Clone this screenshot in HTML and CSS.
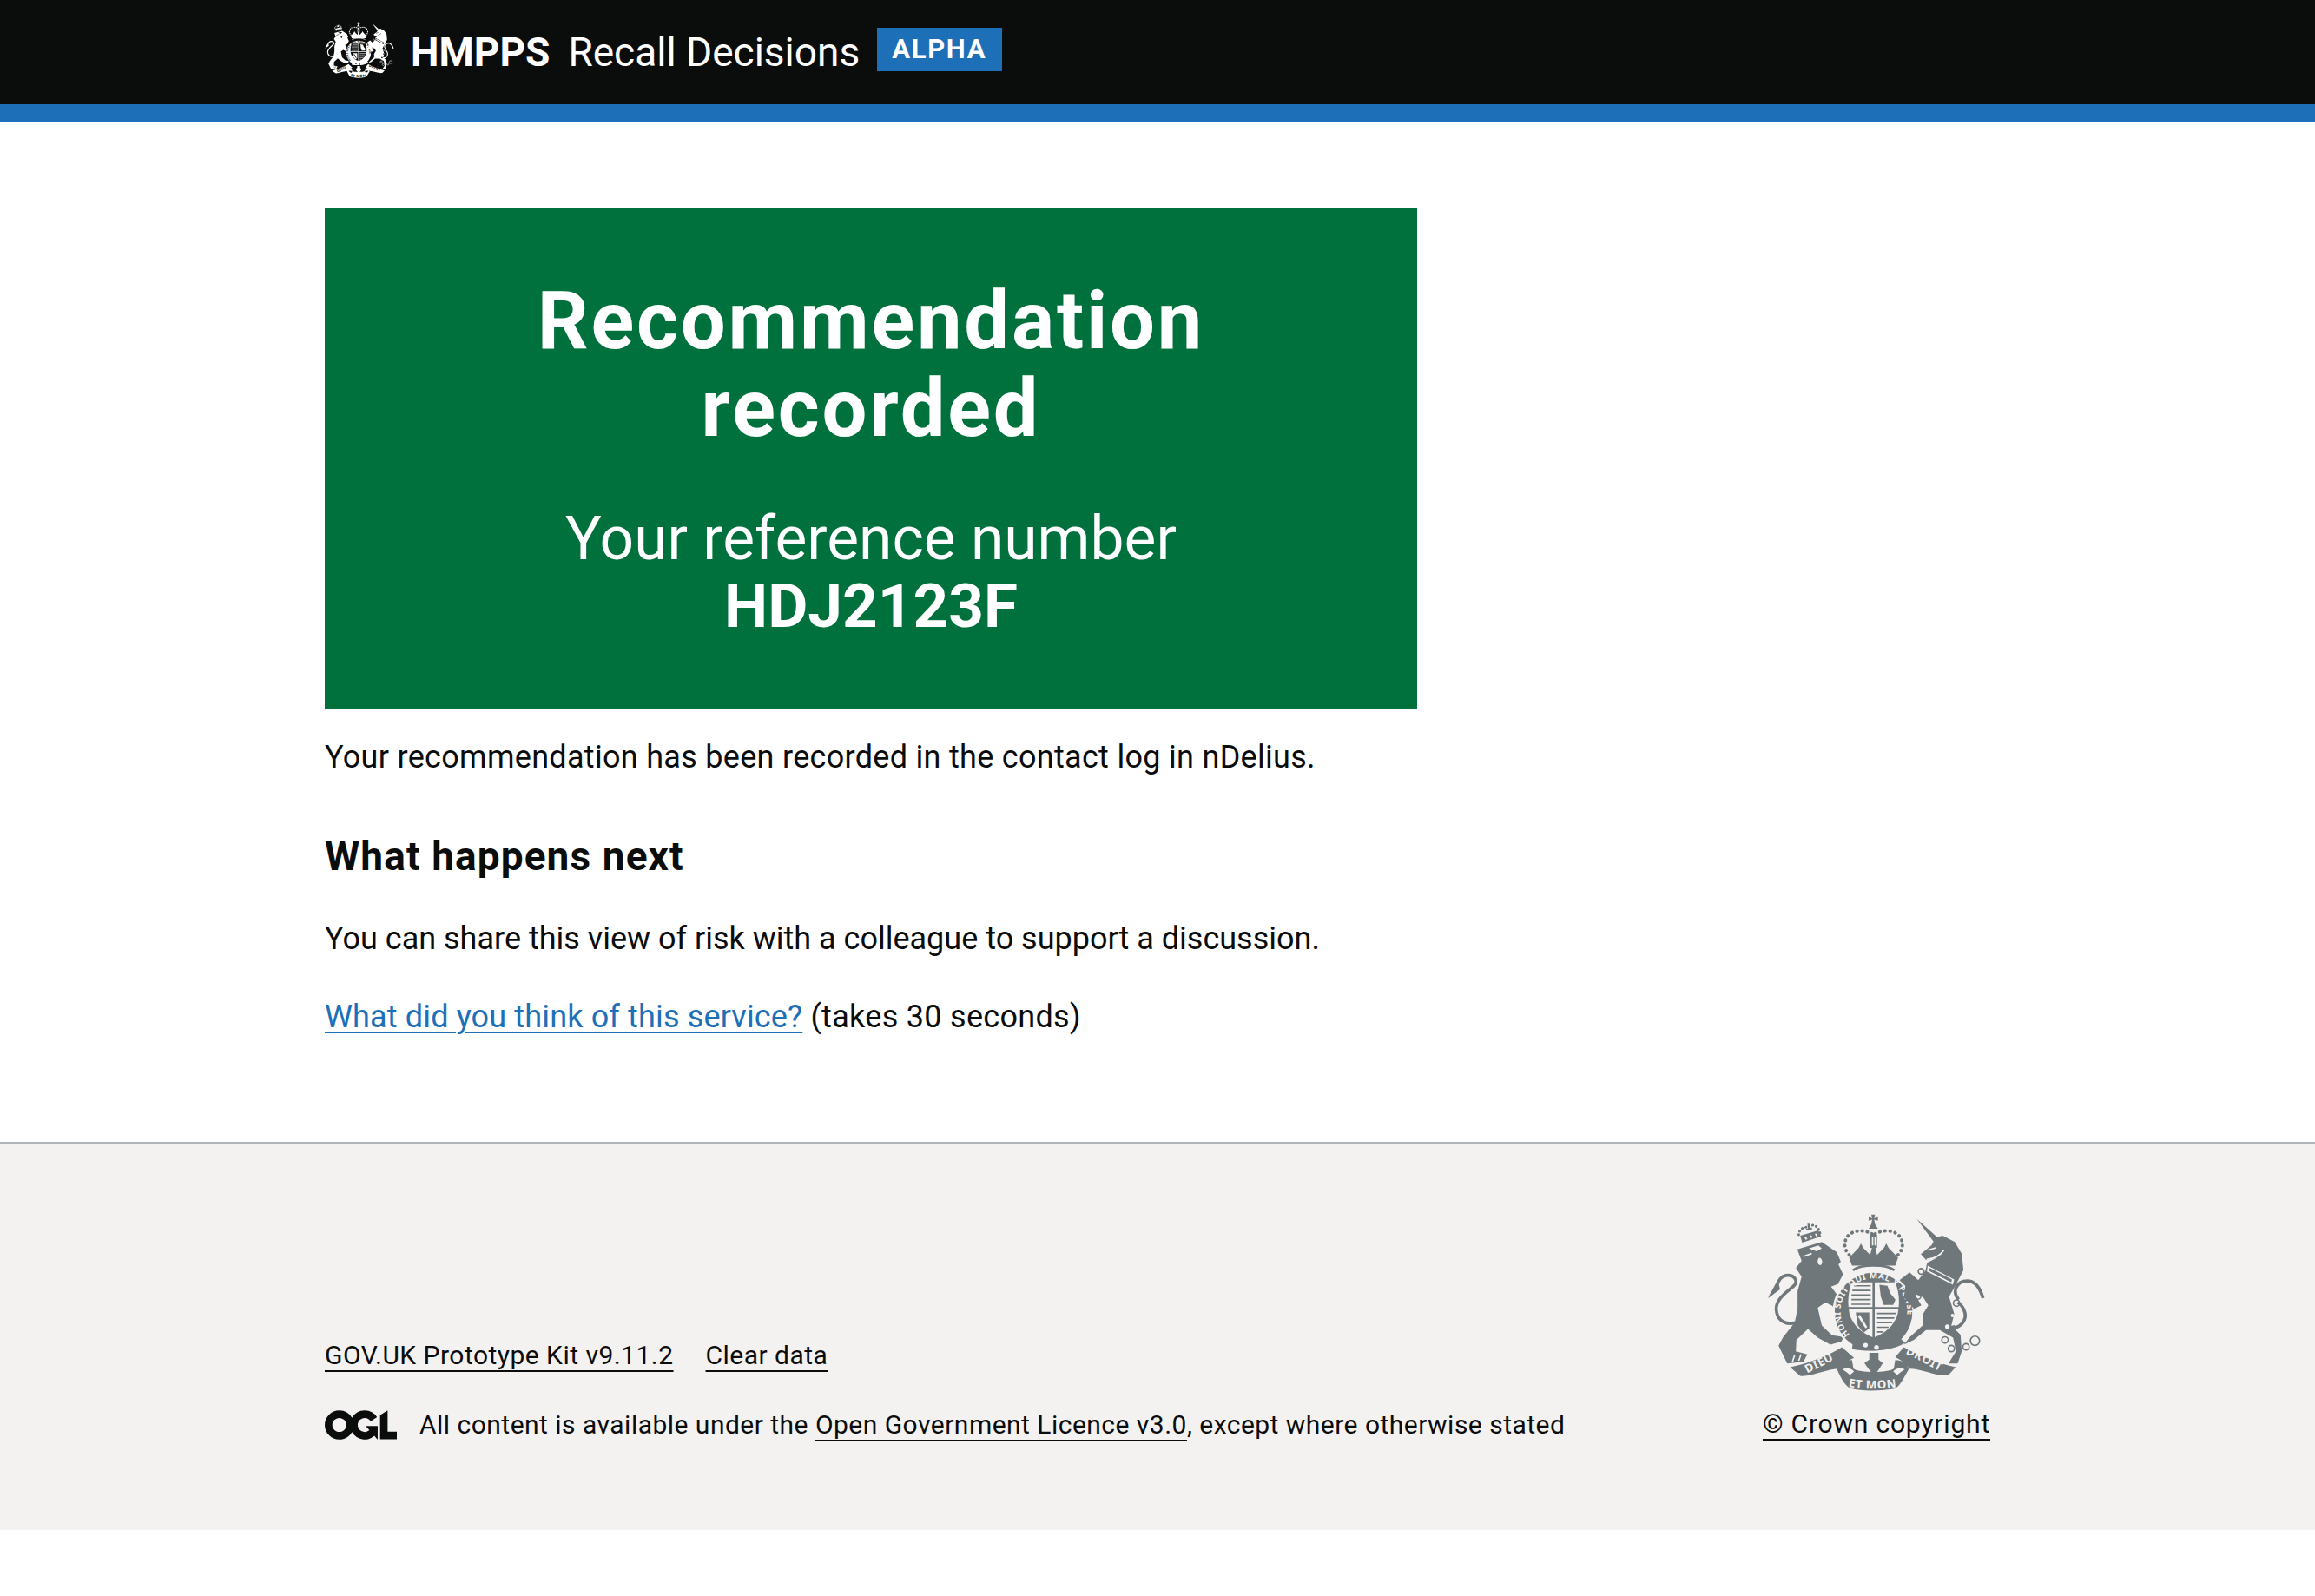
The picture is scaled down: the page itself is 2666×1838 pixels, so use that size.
FILE: index.html
```html
<!DOCTYPE html>
<html lang="en">
<head>
    <meta charset="UTF-8">
    <title>Recommendation recorded - Recall Decisions</title>
    <link rel="stylesheet" href="styles.css">
</head>
<body>
    <svg class="defs" aria-hidden="true">
        <symbol id="crest" viewBox="50 50 760 620">
            <!-- lion -->
            <path class="crest-fg" d="M155 175 L240 150 L262 165 L292 185 L306 218 L298 228 L314 262 L296 296 L272 305 L330 382 L318 402 L285 406 L278 372 L252 360 L226 378 L240 440 L276 474 L316 480 L308 496 L270 506 L226 482 L192 452 L152 490 L150 530 L190 540 L176 566 L120 572 L90 510 L106 480 L146 430 L156 380 L156 320 L170 270 L150 240 L170 215 Z"/>
            <path class="crest-line" d="M148 430 C110 440 85 420 82 385 C80 345 125 320 145 300 C158 285 145 262 115 266 C92 270 88 295 72 320"/>
            <path class="crest-fg" d="M54 345 C60 325 75 305 90 292 L95 315 C80 325 68 335 54 345Z"/>
            <path class="crest-bg" d="M195 172 L228 162 L240 172 L222 182 Z M230 205 C242 205 246 225 236 230 C226 232 222 215 230 205Z"/>
            <path class="crest-gap" d="M176 200 L205 190 M258 362 C262 378 272 392 282 398 M300 378 L292 400 M312 384 L304 402 M168 540 L160 562 M146 542 L138 566"/>
            <path class="crest-dots crest-dots-small" d="M160 125 C160 105 180 95 192 100 C205 85 228 90 234 120"/>
            <path class="crest-fg" d="M165 128 L228 110 L238 130 L172 152 Z M186 103 L192 103 L190 86 L198 86 L198 101 L206 100 L206 106 L186 110 Z"/>
            <path class="crest-bg" d="M180 134 L186 132 L190 140 L184 142 Z M198 128 L204 126 L208 134 L202 136 Z M216 122 L222 120 L226 128 L220 130 Z"/>
            <!-- crown -->
            <path class="crest-fg" d="M403 60 L415 68 L412 55 L425 55 L422 68 L435 60 L435 76 L422 72 L425 88 L435 104 L403 104 L412 88 L415 72 L403 76 Z"/>
            <path class="crest-dots" d="M415 122 C380 100 320 110 320 160 C320 180 335 195 345 205 M425 122 C460 100 520 110 520 160 C520 180 505 195 495 205"/>
            <path class="crest-fg" d="M335 205 L368 170 L376 155 L384 170 L408 195 L414 170 L408 170 L408 125 L432 125 L432 170 L426 170 L432 195 L456 170 L464 155 L472 170 L505 205 L495 232 L345 232 Z"/>
            <path class="crest-bg" d="M414 132 L419 132 L419 162 L414 162 Z M423 132 L428 132 L428 162 L423 162 Z"/>
            <path class="crest-ring" d="M348 248 C375 226 465 226 492 248"/>
            <!-- garter and shield -->
            <circle class="crest-halo" cx="420" cy="392" r="137"/>
            <circle class="crest-fg" cx="420" cy="392" r="135"/>
            <path class="crest-bg" d="M345 290 L495 290 C508 320 512 360 504 398 C494 440 455 470 420 482 C385 470 346 440 336 398 C328 360 332 320 345 290 Z"/>
            <path class="crest-fg" d="M416 285 L424 285 L424 490 L416 490 Z M330 376 L510 376 L510 384 L330 384 Z"/>
            <path class="crest-hatch" d="M352 302 L410 302 M346 318 L410 318 M343 334 L410 334 M343 350 L410 350 M343 366 L410 366 M432 398 L498 398 M432 414 L492 414 M432 430 L484 430 M432 446 L472 446 M432 462 L452 462"/>
            <path class="crest-fg" d="M440 298 L468 302 L478 328 L496 350 L488 368 L455 368 L445 340 Z M358 395 L405 395 L405 450 L385 465 L365 440 Z"/>
            <path class="crest-bg" d="M372 402 L398 445 L392 450 L366 410 Z"/>
            <path id="garter" class="crest-none" d="M337 472 A116 116 0 1 1 505 472"/>
            <text class="crest-text crest-garter"><textPath href="#garter">HONI SOIT QUI MAL Y PENSE</textPath></text>
            <path class="crest-fg" d="M345 522 L350 478 C385 505 450 510 510 482 L530 500 C480 530 400 532 345 522Z"/>
            <circle class="crest-bg" cx="392" cy="508" r="8"/>
            <circle class="crest-bg" cx="430" cy="516" r="8"/>
            <!-- unicorn -->
            <path class="crest-fg" d="M570 70 L640 132 L660 128 L702 150 L726 190 L732 248 L705 300 L682 340 L700 400 L690 440 L722 472 L726 530 L712 572 L680 572 L706 530 L696 482 L650 456 L602 456 L560 490 L525 506 L546 480 L590 440 L590 402 L610 370 L592 342 L562 330 L586 370 L560 382 L526 342 L530 302 L510 282 L545 255 L575 282 L600 250 L606 222 L640 205 L602 212 L584 192 L622 160 L628 148 Z"/>
            <path class="crest-line" d="M712 360 C730 370 745 400 735 420 C728 440 700 455 695 440 M715 350 C690 320 710 285 745 285 C775 285 790 310 800 345"/>
            <path class="crest-bg" d="M608 232 L700 280 L695 298 L605 252 Z"/>
            <path class="crest-fg" d="M615 240 L692 280 L690 290 L612 250 Z M622 228 L628 231 L626 240 L620 238 Z M644 240 L650 243 L648 252 L642 250 Z M668 252 L674 255 L672 264 L666 262 Z"/>
            <path class="crest-gap" d="M610 178 L636 170 M604 210 C630 208 650 198 664 178"/>
            <circle class="crest-ring2" cx="585" cy="252" r="10"/>
            <circle class="crest-ring2" cx="573" cy="338" r="11"/>
            <circle class="crest-ring2" cx="708" cy="362" r="11"/>
            <circle class="crest-ring2" cx="668" cy="490" r="11"/>
            <circle class="crest-ring2" cx="690" cy="520" r="11"/>
            <circle class="crest-ring2" cx="741" cy="514" r="11"/>
            <circle class="crest-ring2" cx="772" cy="493" r="16"/>
            <circle class="crest-bg" cx="676" cy="444" r="8"/>
            <circle class="crest-bg" cx="694" cy="405" r="6"/>
            <!-- motto -->
            <path class="crest-fg" d="M130 585 C200 570 270 540 310 515 L352 552 C330 560 315 580 305 590 C255 590 200 620 165 615 Z"/>
            <path class="crest-fg" d="M705 585 C640 570 570 540 525 515 L495 550 C520 560 535 580 545 590 C590 590 640 620 680 612 Z"/>
            <path class="crest-fg" d="M292 590 C300 570 320 560 345 560 L350 590 C370 605 470 605 490 590 L495 560 C520 560 535 570 542 592 C525 620 510 655 490 660 C430 668 380 668 340 658 C320 650 305 620 292 590 Z"/>
            <path class="crest-bg" d="M312 592 C330 585 345 590 352 600 L338 612 C330 604 320 598 312 592Z M528 592 C510 585 495 590 488 600 L502 612 C510 604 520 598 528 592Z"/>
            <path class="crest-fg" d="M405 535 L437 535 L437 558 L452 570 L440 590 L422 615 L402 590 L388 570 L405 558 Z"/>
            <path id="dieu" class="crest-none" d="M190 606 C220 590 265 570 300 548"/>
            <text class="crest-text crest-motto"><textPath href="#dieu">DIEU</textPath></text>
            <path id="droit" class="crest-none" d="M530 538 C570 553 615 583 665 606"/>
            <text class="crest-text crest-motto"><textPath href="#droit">DROIT</textPath></text>
            <path id="etmon" class="crest-none" d="M332 652 C380 662 460 662 508 652"/>
            <text class="crest-text crest-motto"><textPath href="#etmon">ET MON</textPath></text>
        </symbol>
    </svg>

    <header class="site-header">
        <div class="width-container header-inner">
            <svg class="header-crest" role="img" aria-label="Royal coat of arms"><use href="#crest"/></svg>
            <span class="header-org">HMPPS</span>
            <span class="header-service">Recall Decisions</span>
            <strong class="phase-tag">ALPHA</strong>
        </div>
    </header>

    <main class="width-container main">
        <div class="panel">
            <h1 class="panel-title">Recommendation recorded</h1>
            <div class="panel-body">Your reference number<br><strong class="panel-ref">HDJ2123F</strong></div>
        </div>
        <p class="body-text">Your recommendation has been recorded in the contact log in nDelius.</p>
        <h2 class="heading">What happens next</h2>
        <p class="body-text body-tight">You can share this view of risk with a colleague to support a discussion.</p>
        <p class="body-text"><a class="link" href="#">What did you think of this service?</a> (takes 30 seconds)</p>
    </main>

    <footer class="site-footer">
        <div class="width-container footer-inner">
            <div class="footer-meta">
                <ul class="footer-links">
                    <li><a class="footer-link" href="#">GOV.UK Prototype Kit v9.11.2</a></li>
                    <li><a class="footer-link" href="#">Clear data</a></li>
                </ul>
                <div class="licence">
                    <svg class="ogl" viewBox="0 0 483.2 195.7" role="img" aria-label="Open Government Licence"><path fill="currentColor" d="M421.5 142.8V.1l-50.7 32.3v161.1h112.4v-50.7zm-122.3-9.6A47.12 47.12 0 0 1 221 97.8c0-26 21.1-47.1 47.1-47.1 16.7 0 31.4 8.7 39.7 21.8l42.7-27.2A97.63 97.63 0 0 0 268.1 0c-36.5 0-68.3 20.1-85.1 49.7A98 98 0 0 0 97.8 0C43.9 0 0 43.9 0 97.8s43.9 97.8 97.8 97.8c36.5 0 68.3-20.1 85.1-49.7a97.76 97.76 0 0 0 149.6 25.4l19.4 22.2h3v-87.8h-80l24.3 27.5zM97.8 145c-26 0-47.1-21.1-47.1-47.1s21.1-47.1 47.1-47.1 47.2 21 47.2 47S123.8 145 97.8 145"/></svg>
                    <span>All content is available under the <a class="footer-link" href="#">Open Government Licence v3.0</a>, except where otherwise stated</span>
                </div>
            </div>
            <div class="copyright">
                <svg class="footer-crest" role="img" aria-label="Royal coat of arms"><use href="#crest"/></svg>
                <a class="footer-link" href="#">© Crown copyright</a>
            </div>
        </div>
    </footer>
</body>
</html>
```

FILE: styles.css
```css
body {
    font-family: Roboto, Arial, sans-serif;
    margin: 0;
    padding: 0;
    background-color: #ffffff;
    color: #0b0c0c;
}
.defs {
    display: none;
}
.width-container {
    width: 1918px;
    margin: 0 auto;
}

/* header */
.site-header {
    background-color: #0b0c0c;
    color: #ffffff;
    border-bottom: 20px solid #1d70b8;
    height: 120px;
}
.header-inner {
    display: flex;
    align-items: flex-start;
}
.header-crest {
    --crest-bg: #0b0c0c;
    width: 80px;
    height: 67px;
    margin-top: 24px;
    color: #ffffff;
}
.header-org {
    font-size: 46px;
    font-weight: 700;
    line-height: 60px;
    margin: 30px 0 0 19px;
}
.header-service {
    font-size: 46px;
    line-height: 60px;
    margin: 30px 0 0 21px;
}
.phase-tag {
    background-color: #1d70b8;
    font-size: 31px;
    line-height: 50px;
    letter-spacing: 1.7px;
    padding: 0 18px 0 17px;
    margin: 32px 0 0 20px;
}

/* main */
.main {
    padding-top: 100px;
    padding-bottom: 75px;
}
.panel {
    box-sizing: border-box;
    width: 1258px;
    height: 576px;
    padding: 79px 40px 0;
    background-color: #00703c;
    color: #ffffff;
    text-align: center;
}
.panel-title {
    margin: 0 0 61px;
    padding: 0 180px;
    font-size: 92px;
    line-height: 101px;
    font-weight: 700;
    letter-spacing: 2.8px;
}
.panel-body {
    font-size: 69.5px;
    line-height: 77px;
}
.panel-ref {
    font-size: 71px;
}
.body-text {
    margin: 0 0 48px;
    font-size: 36px;
    line-height: 42px;
    letter-spacing: 0.3px;
}
.body-tight {
    letter-spacing: 0;
}
.panel + .body-text {
    margin-top: 35px;
    margin-bottom: 68px;
}
.heading {
    margin: 0 0 49px;
    font-size: 46px;
    line-height: 50px;
    font-weight: 700;
    letter-spacing: 1.1px;
}
.link {
    color: #1d70b8;
    text-underline-offset: 5px;
    text-decoration-thickness: 2px;
    letter-spacing: 0.15px;
}

/* footer */
.site-footer {
    background-color: #f3f2f1;
    border-top: 2px solid #b1b4b6;
    height: 445px;
    font-size: 30px;
    line-height: 34px;
    letter-spacing: 0.48px;
}
.footer-inner {
    display: flex;
    justify-content: space-between;
    align-items: flex-start;
}
.footer-meta {
    margin-top: 227px;
}
.footer-links {
    display: flex;
    gap: 37px;
    list-style-type: none;
    margin: 0 0 46px;
    padding: 0;
}
.footer-link {
    color: #0b0c0c;
    text-underline-offset: 7px;
    text-decoration-thickness: 2px;
}
.licence {
    display: flex;
    align-items: center;
    gap: 26px;
}
.ogl {
    width: 83px;
    height: 34px;
}
.copyright {
    display: flex;
    flex-direction: column;
    align-items: center;
    margin-top: 80px;
    letter-spacing: 0.8px;
}
.footer-crest {
    --crest-bg: #f3f2f1;
    width: 252px;
    height: 206px;
    margin-bottom: 20px;
    color: #6f777b;
}

/* crest parts */
.crest-fg {
    fill: currentColor;
}
.crest-bg {
    fill: var(--crest-bg);
}
.crest-none {
    fill: none;
}
.crest-halo {
    fill: none;
    stroke: var(--crest-bg);
    stroke-width: 10;
}
.crest-gap {
    fill: none;
    stroke: var(--crest-bg);
    stroke-width: 5;
}
.crest-line {
    fill: none;
    stroke: currentColor;
    stroke-width: 11;
}
.crest-ring {
    fill: none;
    stroke: currentColor;
    stroke-width: 8;
}
.crest-ring2 {
    fill: none;
    stroke: currentColor;
    stroke-width: 5;
}
.crest-dots {
    fill: none;
    stroke: currentColor;
    stroke-width: 12;
    stroke-linecap: round;
    stroke-dasharray: 1 17;
}
.crest-dots-small {
    stroke-width: 9;
    stroke-dasharray: 1 12;
}
.crest-hatch {
    fill: none;
    stroke: currentColor;
    stroke-width: 5;
}
.crest-text {
    fill: var(--crest-bg);
    font-family: "Noto Sans", Arial, sans-serif;
    font-weight: 700;
    letter-spacing: 0;
}
.crest-garter {
    font-size: 30px;
    letter-spacing: 1.5px;
}
.crest-motto {
    font-size: 40px;
    letter-spacing: 2px;
}
```
